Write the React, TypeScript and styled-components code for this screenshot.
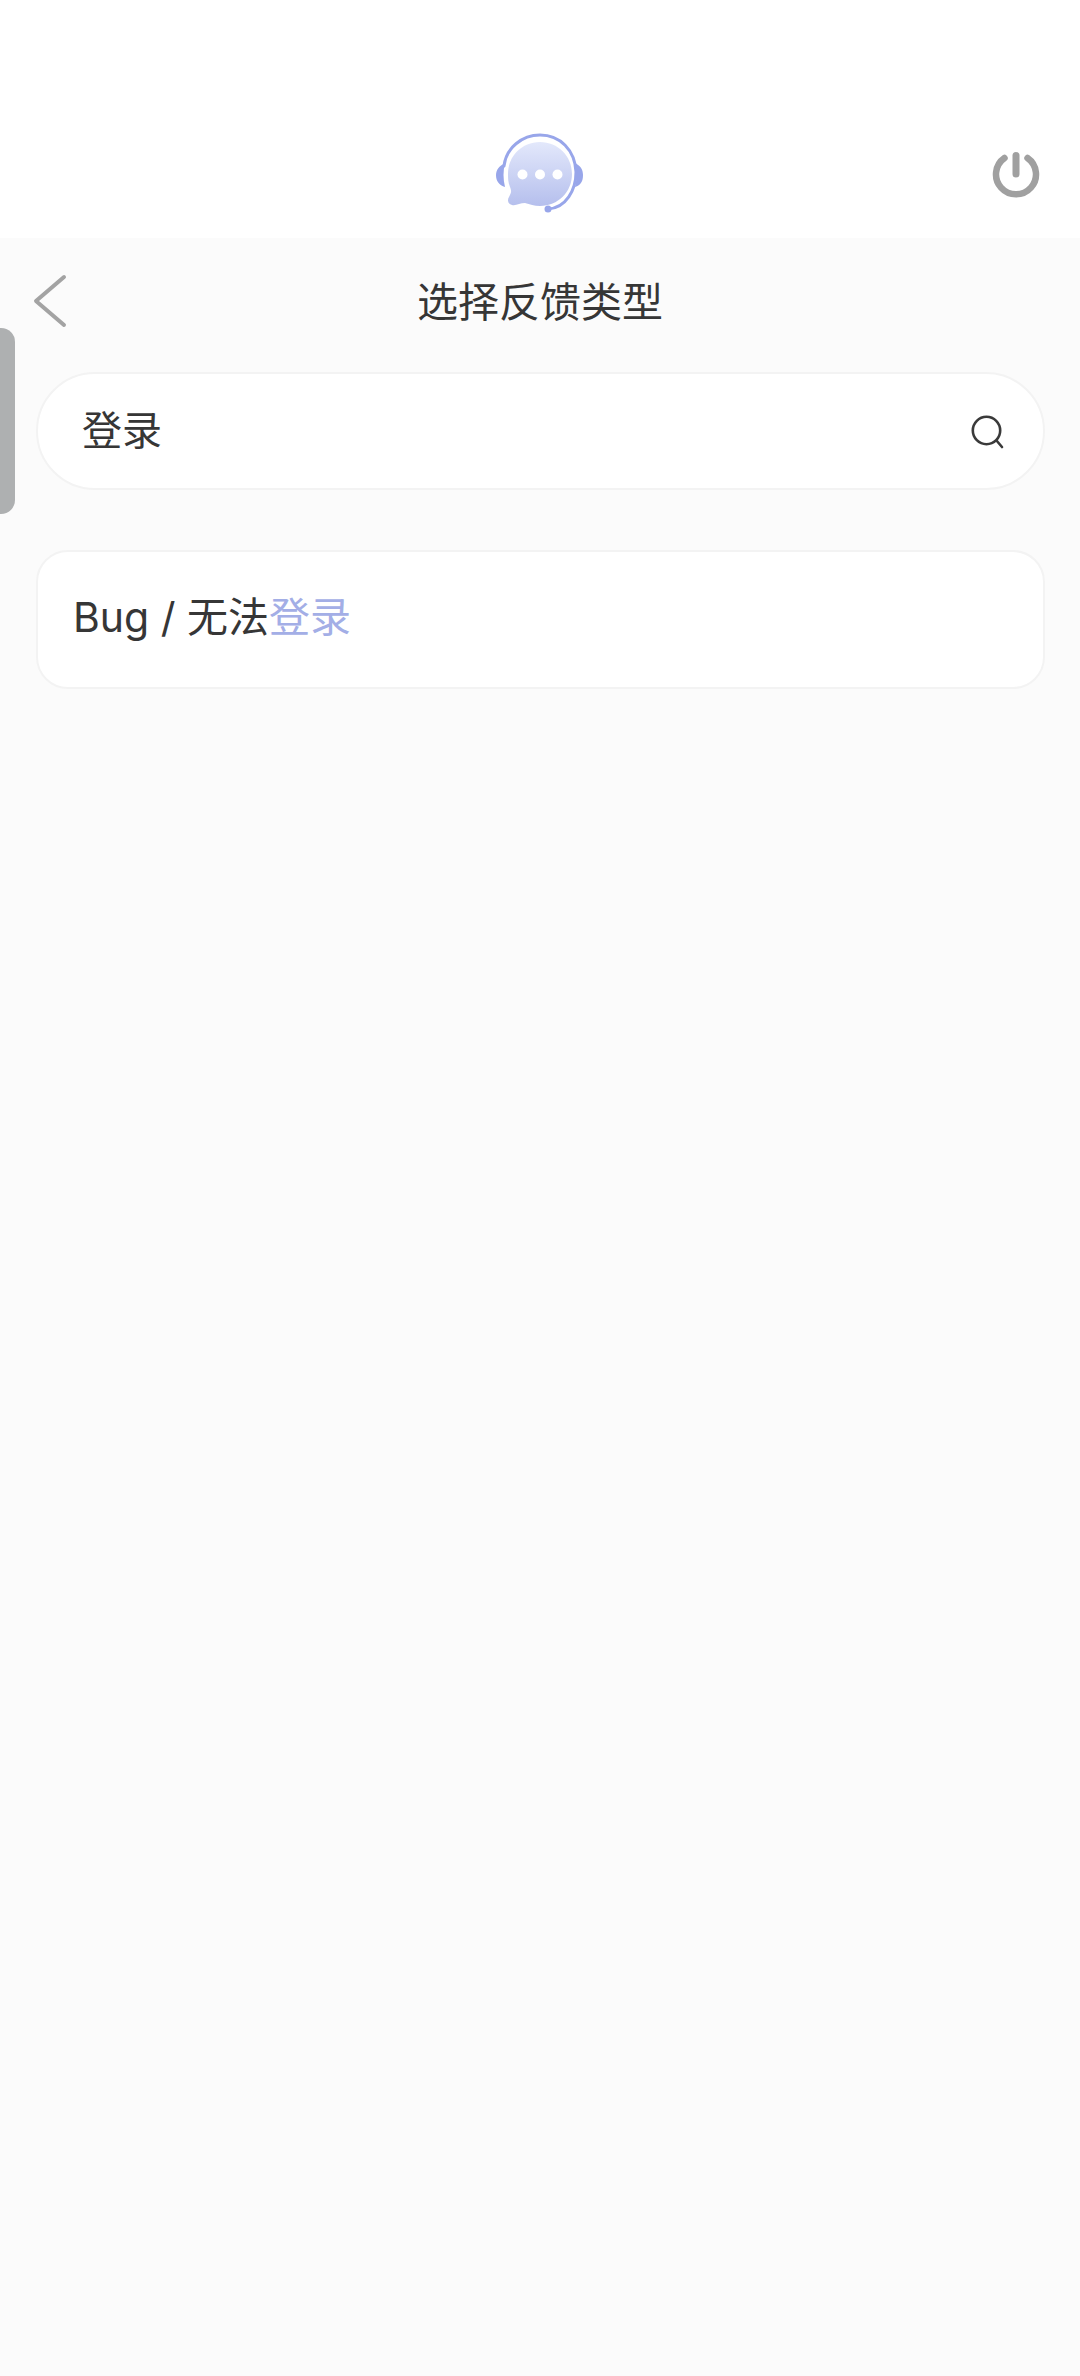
import React from 'react';
import styled, { createGlobalStyle } from 'styled-components';

const GlobalStyle = createGlobalStyle`
  html, body {
    margin: 0;
    padding: 0;
    background: #fbfbfb;
  }
  body {
    font-family: "Inter", "Noto Sans CJK SC", sans-serif;
  }
`;

const Page = styled.div`
  position: relative;
  width: 1080px;
  height: 2376px;
  overflow: hidden;
  background: #fbfbfb;
  color: #363636;
`;

const TopBar = styled.header`
  box-sizing: border-box;
  height: 238px;
  padding-top: 130px;
  background: #ffffff;
  display: grid;
  grid-template-columns: 1fr auto 1fr;
  align-items: start;
`;

const Logo = styled.svg`
  grid-column: 2;
  width: 92px;
  height: 84px;
  display: block;
`;

const Power = styled.svg`
  grid-column: 3;
  justify-self: end;
  margin: 21px 40px 0 0;
  width: 48px;
  height: 48px;
  display: block;
`;

const TitleRow = styled.div`
  position: relative;
  height: 104px;
  display: flex;
  align-items: center;
  justify-content: center;
  padding-top: 24px;
  box-sizing: border-box;
`;

const BackIcon = styled.svg`
  position: absolute;
  left: 32px;
  top: 36px;
  width: 36px;
  height: 54px;
`;

const Title = styled.h1`
  margin: 0;
  font-size: 41px;
  font-weight: 400;
  line-height: 56px;
`;

const Content = styled.main`
  padding: 30px 35px 0 36px;
  display: flex;
  flex-direction: column;
  gap: 60px;
`;

const SearchBox = styled.div`
  box-sizing: border-box;
  height: 118px;
  padding: 0 20px 0 44px;
  display: flex;
  align-items: center;
  justify-content: space-between;
  background: #ffffff;
  border: 2px solid #f3f3f3;
  border-radius: 59px;
`;

const SearchText = styled.span`
  font-size: 40px;
  line-height: 56px;
`;

const SearchIcon = styled.svg`
  width: 34px;
  height: 34px;
  margin: 2px 18px 0 0;
  display: block;
`;

const ResultCard = styled.div`
  box-sizing: border-box;
  height: 139px;
  padding: 0 36px 6px 35px;
  display: flex;
  align-items: center;
  background: #ffffff;
  border: 2px solid #f3f3f3;
  border-radius: 32px;
  font-size: 41px;
  line-height: 56px;
`;

const Match = styled.span`
  color: #a3aee6;
`;

const SideTab = styled.div`
  position: absolute;
  left: 0;
  top: 328px;
  width: 15px;
  height: 186px;
  background: #aeb0b1;
  border-radius: 0 14px 14px 0;
`;

export default function App() {
  return (
    <Page>
      <GlobalStyle />
      <TopBar>
        <Logo viewBox="494 130 92 84" aria-hidden="true">
          <defs>
            <linearGradient id="bubble" x1="0" y1="0" x2="0" y2="1">
              <stop offset="0" stopColor="#e3e8fb" />
              <stop offset="1" stopColor="#b5bfed" />
            </linearGradient>
          </defs>
          <path d="M505 163 C499 166 496 170 496 175 C496 181 499 185 505 187 C503 179 503 171 505 163 Z" fill="#98a6ea" />
          <path d="M575 163 C581 166 583 170 583 175 C583 181 581 185 575 187 C577 179 577 171 575 163 Z" fill="#98a6ea" />
          <path d="M504 166 C506 148 522 135 540 135 C560 135 575 150 576 172 C576 190 566 208 548 209" fill="none" stroke="#98a6ea" strokeWidth="3" strokeLinecap="round" />
          <circle cx="548" cy="209" r="3.500" fill="#98a6ea" />
          <path d="M540 142 C558 142 572 156 572 174 C572 192 558 206 540 206 C534 206 530 204 525 203 C520 203 516 206 512 205 C508 204 507 200 509 197 C511 193 512 192 510 187 C508 182 508 178 508 174 C508 156 522 142 540 142 Z" fill="url(#bubble)" />
          <circle cx="522.500" cy="174.500" r="5" fill="#ffffff" />
          <circle cx="540" cy="174.500" r="5" fill="#ffffff" />
          <circle cx="557.500" cy="174.500" r="5" fill="#ffffff" />
        </Logo>
        <Power viewBox="0 0 48 48" aria-hidden="true">
          <path d="M12.500 7 A20 20 0 1 0 35.500 7" fill="none" stroke="#a0a0a0" strokeWidth="6.500" strokeLinecap="round" />
          <path d="M24 4.500 L24 23" fill="none" stroke="#a0a0a0" strokeWidth="7" strokeLinecap="round" />
        </Power>
      </TopBar>
      <TitleRow>
        <BackIcon viewBox="0 0 36 54" aria-hidden="true">
          <path d="M32 3 L4 27 L32 51" fill="none" stroke="#a3a3a3" strokeWidth="4" strokeLinecap="round" strokeLinejoin="round" />
        </BackIcon>
        <Title>选择反馈类型</Title>
      </TitleRow>
      <Content>
        <SearchBox>
          <SearchText>登录</SearchText>
          <SearchIcon viewBox="0 0 34 34" aria-hidden="true">
            <circle cx="15.500" cy="15.500" r="13.700" fill="none" stroke="#3a3a3a" strokeWidth="2.600" />
            <path d="M25.500 25.500 L31 32" fill="none" stroke="#3a3a3a" strokeWidth="2.600" strokeLinecap="round" />
          </SearchIcon>
        </SearchBox>
        <ResultCard>
          <span>Bug / 无法</span>
          <Match>登录</Match>
        </ResultCard>
      </Content>
      <SideTab />
    </Page>
  );
}
